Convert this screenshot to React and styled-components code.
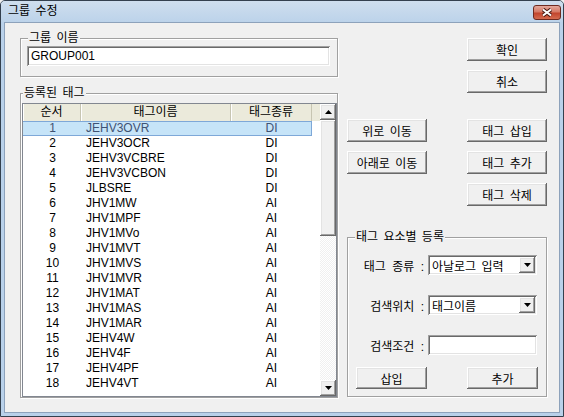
import React from 'react';
import styled, { createGlobalStyle, css } from 'styled-components';

const GlobalStyle = createGlobalStyle`
  html, body {
    margin: 0;
    padding: 0;
    background: #f0f0f0;
  }
  body {
    font-family: "Liberation Sans", "Noto Sans CJK KR", sans-serif;
    font-size: 12px;
    word-spacing: 2px;
    color: #000;
  }
`;

const raised = css`
  background: #f0f0f0;
  box-shadow: inset -1px -1px #696969, inset 1px 1px #fff,
    inset -2px -2px #a0a0a0, inset 2px 2px #e3e3e3;
`;

const sunken = css`
  background: #fff;
  box-shadow: inset 1px 1px #a0a0a0, inset -1px -1px #fff,
    inset 2px 2px #696969, inset -2px -2px #e3e3e3;
`;

const Window = styled.div`
  width: 564px;
  height: 417px;
  box-sizing: border-box;
  border: 1px solid #34404e;
  border-radius: 5px 5px 0 0;
  background: #b9d1ea;
  padding: 0 3px 3px;
  display: flex;
  flex-direction: column;
  overflow: hidden;
`;

const TitleBar = styled.div`
  height: 21px;
  margin: 0 -3px;
  padding: 0 2px 0 7px;
  display: flex;
  align-items: flex-start;
  justify-content: space-between;
  background: linear-gradient(to bottom, #cfdeee 0%, #bcd3ea 100%);
`;

const Title = styled.span`
  line-height: 21px;
  font-size: 12px;
`;

const CloseButton = styled.div`
  margin-top: 4px;
  width: 28px;
  height: 15px;
  box-sizing: border-box;
  border: 1px solid #6e2a20;
  border-radius: 3px;
  background: linear-gradient(to bottom, #e4a89c 0%, #d57965 45%, #c2452d 55%, #d46b4f 100%);
  display: flex;
  align-items: center;
  justify-content: center;
`;

const Body = styled.div`
  flex: 1;
  background: #f0f0f0;
  border: 1px solid #8da2bb;
  display: flex;
  padding: 8px 0 0 15px;
`;

const LeftColumn = styled.div`
  width: 318px;
  display: flex;
  flex-direction: column;
`;

const GroupBox = styled.fieldset`
  margin: ${(p) => p.$mt || 0}px 0 0;
  padding: ${(p) => p.$pad};
  border: 1px solid #a0a0a0;
  box-shadow: inset 1px 1px #fff, 1px 1px #fff;
  min-width: 0;
  box-sizing: border-box;
  width: ${(p) => p.$w}px;
  height: ${(p) => p.$h}px;
`;

const Legend = styled.legend`
  padding: 0 1px;
  margin-left: ${(p) => p.$ml || 1}px;
  line-height: 14px;
  font-size: 12px;
  background: #f0f0f0;
`;

const TextInput = styled.div`
  ${sunken};
  width: ${(p) => p.$w}px;
  height: 20px;
  box-sizing: border-box;
  padding: 0 4px;
  line-height: 20px;
  margin-top: ${(p) => p.$mt || 0}px;
`;

const ListBox = styled.div`
  height: 294px;
  box-sizing: border-box;
  border: 1px solid #828790;
  background: #fff;
  display: flex;
  overflow: hidden;
`;

const Table = styled.div`
  flex: 1;
  display: flex;
  flex-direction: column;
  overflow: hidden;
`;

const HeaderRow = styled.div`
  height: 17px;
  display: flex;
  background: #ebeadb;
  flex-shrink: 0;
`;

const HeaderCell = styled.div`
  width: ${(p) => p.$w}px;
  box-sizing: border-box;
  text-align: center;
  line-height: 16px;
  border-right: 1px solid #c7c5b2;
  box-shadow: inset 1px 0 #fff;
`;

const HeaderFill = styled.div`
  flex: 1;
`;

const Row = styled.div`
  width: 290px;
  height: 15px;
  display: flex;
  flex-shrink: 0;
  box-sizing: border-box;
  margin-left: -1px;
  color: ${(p) => (p.$selected ? '#3f5273' : '#000')};
  background: ${(p) => (p.$selected ? '#c6e4f8' : 'transparent')};
  border: 1px solid ${(p) => (p.$selected ? '#7ea8d8' : 'transparent')};
`;

const Cell = styled.div`
  width: ${(p) => p.$w}px;
  text-align: ${(p) => p.$align || 'center'};
  padding-left: ${(p) => (p.$align === 'left' ? 4 : 0)}px;
  box-sizing: border-box;
  line-height: 13px;
  white-space: nowrap;
`;

const ScrollBar = styled.div`
  width: 16px;
  display: flex;
  flex-direction: column;
`;

const ScrollButton = styled.div`
  ${raised};
  width: 16px;
  height: 16px;
  display: flex;
  align-items: center;
  justify-content: center;
  flex-shrink: 0;
`;

const Thumb = styled.div`
  ${raised};
  height: 116px;
  flex-shrink: 0;
`;

const Track = styled.div`
  flex: 1;
  background: repeating-conic-gradient(#f0f0f0 0 25%, #fff 0 50%) 0 0 / 2px 2px;
`;

const RightArea = styled.div`
  width: 200px;
  margin-left: 9px;
  display: flex;
  flex-direction: column;
`;

const TopButtons = styled.div`
  padding-top: 7px;
  display: flex;
  flex-direction: column;
  align-items: flex-end;
  gap: 9px;
`;

const ButtonGrid = styled.div`
  margin-top: 26px;
  display: grid;
  grid-template-columns: 80px 80px;
  column-gap: 40px;
  row-gap: 9px;
`;

const Button = styled.div`
  ${raised};
  width: ${(p) => p.$w || 80}px;
  height: ${(p) => p.$h || 23}px;
  grid-column: ${(p) => p.$col || 'auto'};
  display: flex;
  align-items: center;
  justify-content: center;
  font-size: 12px;
`;

const FormGrid = styled.div`
  margin-top: 11px;
  display: grid;
  grid-template-columns: 73px 109px;
  column-gap: 4px;
  row-gap: 20px;
  align-items: center;
`;

const FieldLabel = styled.div`
  text-align: right;
  white-space: nowrap;
  word-spacing: 3px;
`;

const Combo = styled.div`
  ${sunken};
  height: 20px;
  box-sizing: border-box;
  padding: 2px 2px 2px 4px;
  display: flex;
  align-items: center;
  justify-content: space-between;
`;

const ComboButton = styled(ScrollButton)``;

const FormButtons = styled.div`
  margin-top: 12px;
  padding-left: 5px;
  display: flex;
  gap: 40px;
`;

const Arrow = ({ up }) => (
  <svg width="7" height="4" viewBox="0 0 7 4">
    <polygon points={up ? '0,4 7,4 3.5,0' : '0,0 7,0 3.5,4'} fill="#000" />
  </svg>
);

const rows = [
  ['1', 'JEHV3OVR', 'DI'],
  ['2', 'JEHV3OCR', 'DI'],
  ['3', 'JEHV3VCBRE', 'DI'],
  ['4', 'JEHV3VCBON', 'DI'],
  ['5', 'JLBSRE', 'DI'],
  ['6', 'JHV1MW', 'AI'],
  ['7', 'JHV1MPF', 'AI'],
  ['8', 'JHV1MVo', 'AI'],
  ['9', 'JHV1MVT', 'AI'],
  ['10', 'JHV1MVS', 'AI'],
  ['11', 'JHV1MVR', 'AI'],
  ['12', 'JHV1MAT', 'AI'],
  ['13', 'JHV1MAS', 'AI'],
  ['14', 'JHV1MAR', 'AI'],
  ['15', 'JEHV4W', 'AI'],
  ['16', 'JEHV4F', 'AI'],
  ['17', 'JEHV4PF', 'AI'],
  ['18', 'JEHV4VT', 'AI'],
];

export default function App() {
  return (
    <>
      <GlobalStyle />
      <Window>
        <TitleBar>
          <Title>그룹 수정</Title>
          <CloseButton>
            <svg width="14" height="9" viewBox="0 0 14 9">
              <path d="M3 1.5 L11 7.5 M11 1.5 L3 7.5" stroke="#4a1a14" strokeWidth="4" />
              <path d="M3 1.5 L11 7.5 M11 1.5 L3 7.5" stroke="#fff" strokeWidth="2" />
            </svg>
          </CloseButton>
        </TitleBar>
        <Body>
          <LeftColumn>
            <GroupBox $w={318} $h={46} $pad="1px 7px 10px 6px">
              <Legend>그룹 이름</Legend>
              <TextInput $w={303}>GROUP001</TextInput>
            </GroupBox>
            <GroupBox $w={318} $h={312} $mt={9} $pad="3px 0 0 1px">
              <Legend>등록된 태그</Legend>
              <ListBox>
                <Table>
                  <HeaderRow>
                    <HeaderCell $w={58}>순서</HeaderCell>
                    <HeaderCell $w={150}>태그이름</HeaderCell>
                    <HeaderCell $w={81}>태그종류</HeaderCell>
                    <HeaderFill />
                  </HeaderRow>
                  {rows.map(([n, name, kind], i) => (
                    <Row key={n} $selected={i === 0}>
                      <Cell $w={59}>{n}</Cell>
                      <Cell $w={150} $align="left">{name}</Cell>
                      <Cell $w={79}>{kind}</Cell>
                    </Row>
                  ))}
                </Table>
                <ScrollBar>
                  <ScrollButton><Arrow up /></ScrollButton>
                  <Thumb />
                  <Track />
                  <ScrollButton><Arrow /></ScrollButton>
                </ScrollBar>
              </ListBox>
            </GroupBox>
          </LeftColumn>
          <RightArea>
            <TopButtons>
              <Button>확인</Button>
              <Button>취소</Button>
            </TopButtons>
            <ButtonGrid>
              <Button>위로 이동</Button>
              <Button>태그 삽입</Button>
              <Button>아래로 이동</Button>
              <Button>태그 추가</Button>
              <Button $col={2}>태그 삭제</Button>
            </ButtonGrid>
            <GroupBox $w={200} $h={167} $mt={24} $pad="0 8px 0 3px">
              <Legend $ml={4}>태그 요소별 등록</Legend>
              <FormGrid>
                <FieldLabel>태그 종류 :</FieldLabel>
                <Combo>
                  <span>아날로그 입력</span>
                  <ComboButton><Arrow /></ComboButton>
                </Combo>
                <FieldLabel>검색위치 :</FieldLabel>
                <Combo>
                  <span>태그이름</span>
                  <ComboButton><Arrow /></ComboButton>
                </Combo>
                <FieldLabel>검색조건 :</FieldLabel>
                <TextInput $w={109} />
              </FormGrid>
              <FormButtons>
                <Button $w={71} $h={22}>삽입</Button>
                <Button $w={71} $h={22}>추가</Button>
              </FormButtons>
            </GroupBox>
          </RightArea>
        </Body>
      </Window>
    </>
  );
}
